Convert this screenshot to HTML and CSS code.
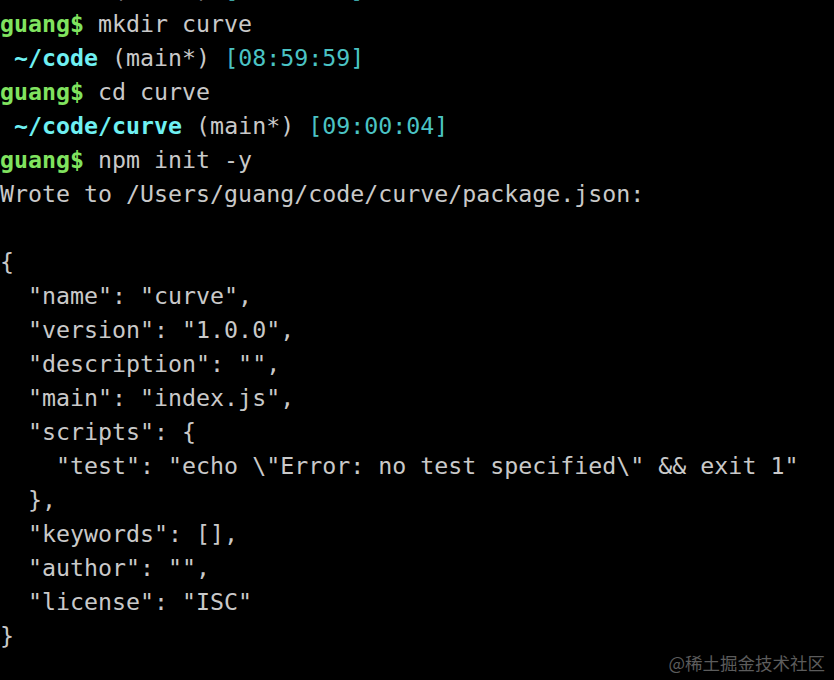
FILE: index.html
```html
<!DOCTYPE html>
<html>
<head>
<meta charset="utf-8">
<link rel="stylesheet" href="styles.css">
</head>
<body>
<div class="term">
<div class="line"> <span class="dir">~/code</span> (main*) <span class="time">[08:59:51]</span></div>
<div class="line"><span class="prompt">guang$</span> mkdir curve</div>
<div class="line"> <span class="dir">~/code</span> (main*) <span class="time">[08:59:59]</span></div>
<div class="line"><span class="prompt">guang$</span> cd curve</div>
<div class="line"> <span class="dir">~/code/curve</span> (main*) <span class="time">[09:00:04]</span></div>
<div class="line"><span class="prompt">guang$</span> npm init -y</div>
<div class="line">Wrote to /Users/guang/code/curve/package.json:</div>
<div class="line"> </div>
<div class="line">{</div>
<div class="line">  "name": "curve",</div>
<div class="line">  "version": "1.0.0",</div>
<div class="line">  "description": "",</div>
<div class="line">  "main": "index.js",</div>
<div class="line">  "scripts": {</div>
<div class="line">    "test": "echo \"Error: no test specified\" &amp;&amp; exit 1"</div>
<div class="line">  },</div>
<div class="line">  "keywords": [],</div>
<div class="line">  "author": "",</div>
<div class="line">  "license": "ISC"</div>
<div class="line">}</div>
</div>
<div class="watermark">@稀土掘金技术社区</div>
</body>
</html>
```
FILE: styles.css
```css
html, body {
  margin: 0;
  padding: 0;
  background: #000;
  width: 834px;
  height: 680px;
  overflow: hidden;
}
body {
  position: relative;
}
.term {
  margin-top: -27px;
  font-family: "DejaVu Sans Mono", "Liberation Mono", monospace;
  font-size: 23.27px;
  line-height: 34px;
  color: #c9c9c9;
}
.line {
  height: 34px;
  white-space: pre;
}
.prompt {
  color: #80e35f;
  font-weight: bold;
}
.dir {
  color: #6ff0f2;
  font-weight: bold;
}
.time {
  color: #4bc3c4;
}
.watermark {
  position: absolute;
  right: 9px;
  bottom: 8px;
  font-family: "Noto Sans CJK SC", "Noto Sans", sans-serif;
  font-size: 17.5px;
  line-height: 18px;
  color: #5c5c5c;
}
```
